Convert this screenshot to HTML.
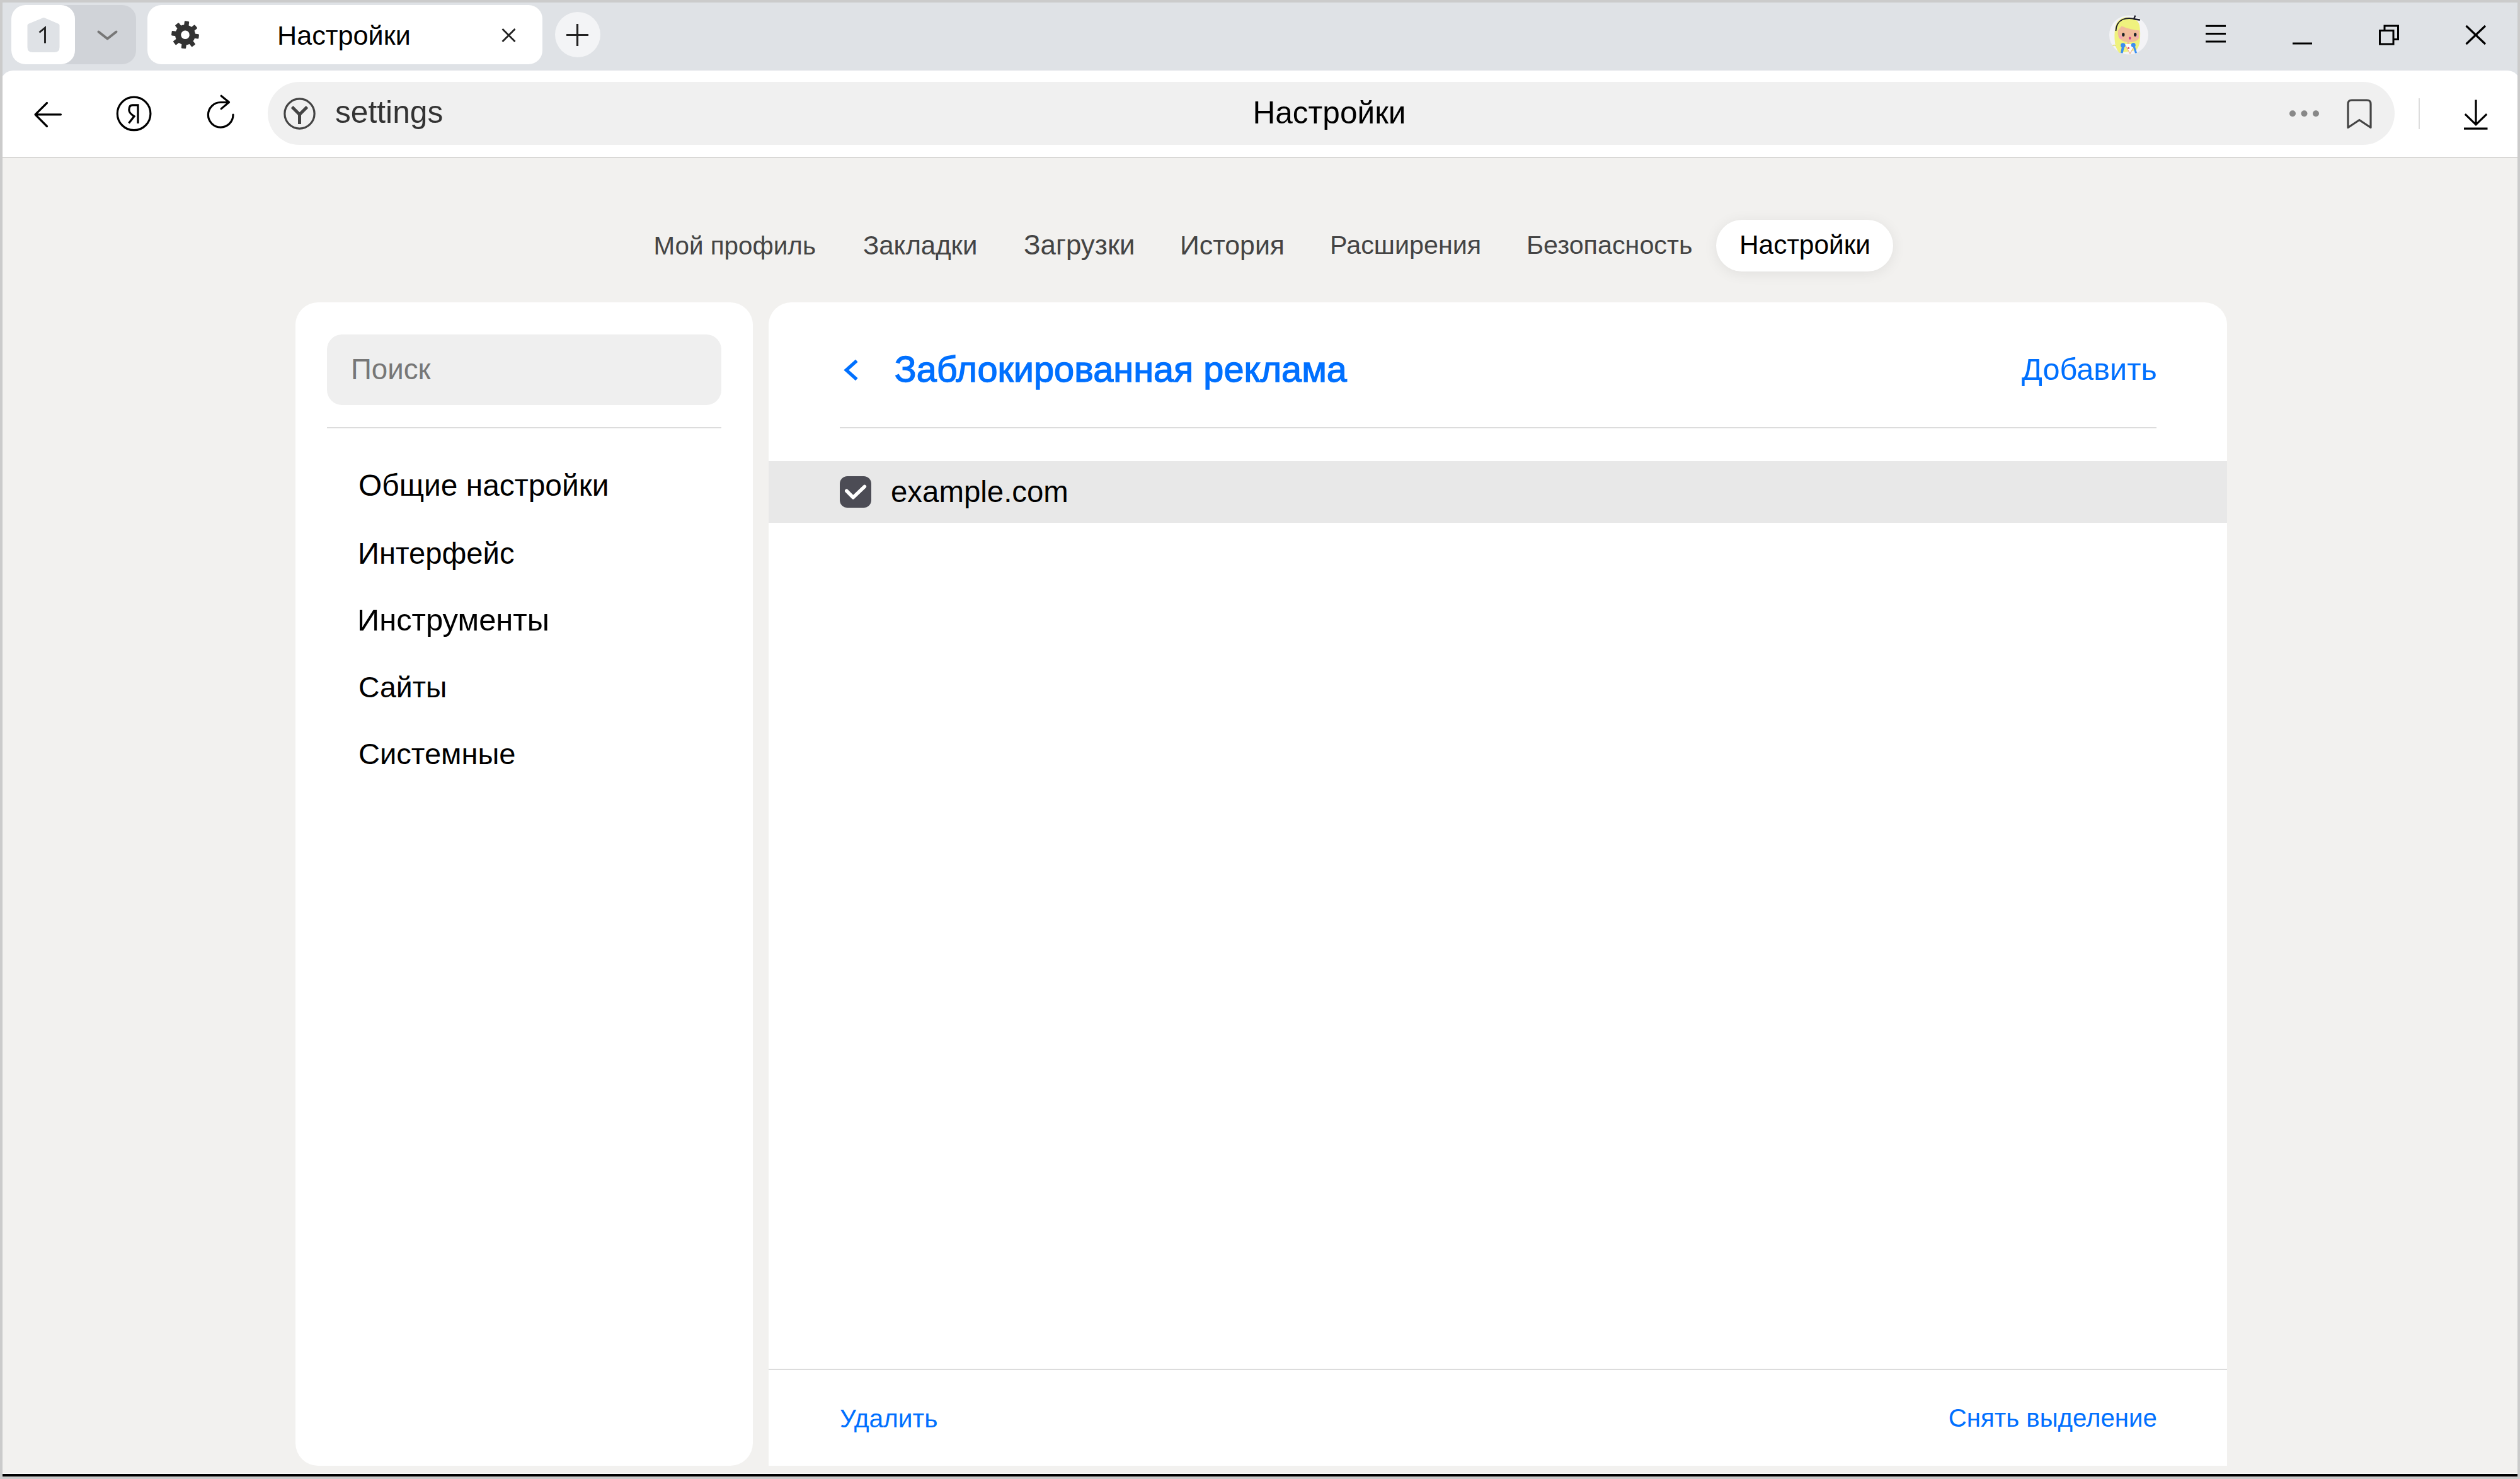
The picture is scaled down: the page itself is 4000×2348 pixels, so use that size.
<!DOCTYPE html>
<html><head><meta charset="utf-8">
<style>
*{box-sizing:border-box;margin:0;padding:0}
html,body{width:4000px;height:2348px;overflow:hidden}
body{position:relative;background:#cbcbcb;font-family:"Liberation Sans",sans-serif}
.a{position:absolute}
.t{position:absolute;white-space:nowrap;line-height:1;z-index:2}
svg{position:absolute;overflow:visible}
</style></head><body>
<!-- tab strip -->
<div class="a" style="left:4px;top:4px;width:3992px;height:120px;background:#dfe2e6"></div>
<!-- tab 1 group -->
<div class="a" style="left:18px;top:8px;width:198px;height:94px;border-radius:22px;background:#d0d3d8"></div>
<div class="a" style="left:18px;top:8px;width:101px;height:94px;border-radius:22px;background:#fff"></div>
<!-- active tab -->
<div class="a" style="left:234px;top:8px;width:627px;height:94px;border-radius:22px;background:#fff"></div>
<!-- new tab button -->
<div class="a" style="left:881px;top:19px;width:72px;height:72px;border-radius:50%;background:#f3f4f6"></div>

<!-- toolbar -->
<div class="a" style="left:1px;top:112px;width:3999px;height:139px;background:#fff;border-radius:20px 20px 0 0;border-bottom:2px solid #d9d8d6"></div>
<!-- address bar -->
<div class="a" style="left:425px;top:130px;width:3376px;height:100px;border-radius:50px;background:#f0f0f0"></div>

<!-- page -->
<div class="a" style="left:4px;top:251px;width:3992px;height:2088px;background:#f2f1ef"></div>
<div class="a" style="left:4px;top:2339px;width:3992px;height:1px;background:#fff"></div>
<div class="a" style="left:4px;top:2340px;width:3992px;height:4px;background:#000"></div>

<!-- nav pill -->
<div class="a" style="left:2724px;top:349px;width:281px;height:82px;border-radius:41px;background:#fff;box-shadow:0 3px 22px rgba(0,0,0,.075)"></div>

<!-- sidebar card -->
<div class="a" style="left:469px;top:480px;width:726px;height:1847px;border-radius:36px;background:#fff"></div>
<div class="a" style="left:519px;top:531px;width:626px;height:112px;border-radius:24px;background:#efefef"></div>
<div class="a" style="left:519px;top:678px;width:626px;height:2px;background:#dcdcdc"></div>

<!-- main card -->
<div class="a" style="left:1220px;top:480px;width:2315px;height:1847px;border-radius:36px 36px 0 0;background:#fff"></div>
<div class="a" style="left:1333px;top:678px;width:2090px;height:2px;background:#dcdcdc"></div>
<div class="a" style="left:1220px;top:732px;width:2315px;height:98px;background:#e8e8e8"></div>
<div class="a" style="left:1220px;top:2173px;width:2315px;height:2px;background:#dcdcdc"></div>
<div class="a" style="left:1333px;top:756px;width:50px;height:50px;border-radius:12px;background:#4c4c55"></div>

<!-- TEXT -->
<div class="t" style="left:440.0px;top:35.2px;font-size:43.2px;color:#000;">Настройки</div>
<div class="t" style="left:1988.4px;top:154.7px;font-size:49.6px;color:#000;">Настройки</div>
<div class="t" style="left:532.0px;top:154.4px;font-size:49.7px;color:#333;">settings</div>
<div class="t" style="left:1037.4px;top:370.0px;font-size:40.4px;color:#444;">Мой профиль</div>
<div class="t" style="left:1370.0px;top:368.7px;font-size:41.9px;color:#444;">Закладки</div>
<div class="t" style="left:1625.0px;top:367.0px;font-size:43.9px;color:#444;">Загрузки</div>
<div class="t" style="left:1873.0px;top:368.0px;font-size:42.8px;color:#444;">История</div>
<div class="t" style="left:2111.0px;top:369.2px;font-size:41.3px;color:#444;">Расширения</div>
<div class="t" style="left:2423.0px;top:369.2px;font-size:41.3px;color:#444;">Безопасность</div>
<div class="t" style="left:2761.0px;top:368.3px;font-size:42.4px;color:#000;">Настройки</div>
<div class="t" style="left:557.0px;top:564.3px;font-size:45.7px;color:#777;">Поиск</div>
<div class="t" style="left:569.0px;top:747.4px;font-size:47.9px;color:#000;">Общие настройки</div>
<div class="t" style="left:568.0px;top:854.5px;font-size:47.2px;color:#000;">Интерфейс</div>
<div class="t" style="left:567.0px;top:960.0px;font-size:48.9px;color:#000;">Инструменты</div>
<div class="t" style="left:569.0px;top:1067.7px;font-size:46.4px;color:#000;">Сайты</div>
<div class="t" style="left:569.0px;top:1172.9px;font-size:47.1px;color:#000;">Системные</div>
<div class="t" style="left:1419.8px;top:558.1px;font-size:57.7px;color:#0070ff;-webkit-text-stroke:1.3px #0070ff;">Заблокированная реклама</div>
<div class="t" style="left:3209.0px;top:561.9px;font-size:48.6px;color:#0070ff;">Добавить</div>
<div class="t" style="left:1414.0px;top:757.3px;font-size:47.4px;color:#000;">example.com</div>
<div class="t" style="left:1333.0px;top:2232.2px;font-size:40.7px;color:#0070ff;">Удалить</div>
<div class="t" style="left:3092.8px;top:2232.0px;font-size:40.2px;color:#0070ff;">Снять выделение</div>

<!-- /TEXT -->
<!-- ICONS -->
<svg width="4000" height="2348" viewBox="0 0 4000 2348" style="left:0;top:0" fill="none">
<!-- tab1 badge -->
<path d="M69.4 31 L91.5 40.5 V75 Q91.5 80 86.5 80 H51.5 Q46.5 80 46.5 75 V40.5 Z" fill="#dfe2e6" stroke="#dfe2e6" stroke-width="6" stroke-linejoin="round"/>
<path d="M62.5 51.5 L71.5 44 V68.5" stroke="#222" stroke-width="2.9" stroke-linejoin="miter"/>
<!-- chevron -->
<polyline points="156.5,50.5 170.5,61.5 184.5,50.5" stroke="#777" stroke-width="4" stroke-linecap="round" stroke-linejoin="round"/>
<!-- gear -->
<g transform="translate(294 55.3) rotate(7)" fill="#333">
 <circle r="16"/>
 <rect x="-3.7" y="-21.8" width="7.4" height="10" rx="1.2"/>
 <rect x="-3.7" y="-21.8" width="7.4" height="10" rx="1.2" transform="rotate(45)"/>
 <rect x="-3.7" y="-21.8" width="7.4" height="10" rx="1.2" transform="rotate(90)"/>
 <rect x="-3.7" y="-21.8" width="7.4" height="10" rx="1.2" transform="rotate(135)"/>
 <rect x="-3.7" y="-21.8" width="7.4" height="10" rx="1.2" transform="rotate(180)"/>
 <rect x="-3.7" y="-21.8" width="7.4" height="10" rx="1.2" transform="rotate(225)"/>
 <rect x="-3.7" y="-21.8" width="7.4" height="10" rx="1.2" transform="rotate(270)"/>
 <rect x="-3.7" y="-21.8" width="7.4" height="10" rx="1.2" transform="rotate(315)"/>
 <circle r="6.8" fill="#fff"/>
</g>
<!-- tab close -->
<path d="M797.5 46 L817.5 66 M817.5 46 L797.5 66" stroke="#222" stroke-width="2.8"/>
<!-- plus -->
<path d="M899 55.5 H934 M916.5 38 V73" stroke="#222" stroke-width="3.2"/>
<!-- avatar -->
<g>
 <circle cx="3379" cy="55.5" r="31" fill="#f3f3f6"/>
 <path d="M3358 42 Q3361 29 3375 27.5 Q3392 27 3396 40 Q3398 52 3396.5 66 Q3395 76 3390 80 L3364 84 Q3357 76 3356.5 62 Q3356 50 3358 42 Z" fill="#eff27e"/>
 <path d="M3367.5 41.5 Q3381 47 3396 48.5 L3395.5 60 Q3393 66.5 3380 67 Q3366 66.5 3362.5 58 Q3361 52 3362 48 Z" fill="#f1bc9b"/>
 <path d="M3358.5 49 Q3359 36 3369 31 Q3380 27 3390 31" stroke="#1d1d2a" stroke-width="1.8"/>
 <path d="M3387 30 L3389 25.5 M3389 30.5 L3396 31.5" stroke="#1d1d2a" stroke-width="2.4" stroke-linecap="round"/>
 <ellipse cx="3370.3" cy="55" rx="2.2" ry="2.9" fill="#1b2226"/>
 <ellipse cx="3389.2" cy="55" rx="2.2" ry="2.9" fill="#1b2226"/>
 <circle cx="3366" cy="58.8" r="2.6" fill="#f3a2bd"/>
 <circle cx="3392.5" cy="58" r="1.8" fill="#f3a2bd"/>
 <ellipse cx="3380.8" cy="60.6" rx="1.7" ry="2.2" fill="#c53a8c"/>
 <rect x="3376.5" y="66" width="3.5" height="5" fill="#f1bc9b"/>
 <path d="M3372 70 H3390 L3381 86 Z" fill="#fbfdff"/>
 <path d="M3373 71 L3381 85 L3389 71" stroke="#f0b08a" stroke-width="1.2"/>
 <circle cx="3369.8" cy="72" r="3.7" fill="#3b8ef0"/>
 <circle cx="3386.3" cy="71.6" r="3.5" fill="#3b8ef0"/>
 <path d="M3368 74 L3366 84 L3369.5 84.5 L3372 75 Z M3389 74 L3392 84 L3389 84.5 L3386 75 Z" fill="#3b8ef0"/>
 <circle cx="3378.6" cy="76.3" r="1.5" fill="#e0405c"/>
 <path d="M3353.5 73 Q3356 70 3358 73" stroke="#dede70" stroke-width="1.6"/>
</g>
<!-- hamburger -->
<path d="M3501 41.2 H3533 M3501 53.6 H3533 M3501 66 H3533" stroke="#000" stroke-width="3"/>
<!-- minimize -->
<path d="M3639 69 H3670" stroke="#000" stroke-width="3"/>
<!-- restore -->
<rect x="3777.5" y="48.5" width="21.5" height="21.5" stroke="#000" stroke-width="3"/>
<path d="M3785 47 V41 H3806.5 V62.5 H3800" stroke="#000" stroke-width="3"/>
<!-- close -->
<path d="M3914.5 41 L3945 70 M3945 41 L3914.5 70" stroke="#000" stroke-width="3.2"/>

<!-- back arrow -->
<path d="M96.5 181.8 H56 M74.5 163.5 L56 181.8 L74.5 200.5" stroke="#000" stroke-width="3.2" stroke-linecap="round" stroke-linejoin="round"/>
<!-- Ya -->
<circle cx="212.6" cy="180.4" r="26.3" stroke="#000" stroke-width="3.2"/>
<path d="M219 196 V166.8 H210.5 C206 166.8 204.8 170.5 204.8 174.5 C204.8 178.5 207 181 213 184.6 L204.5 195.6" stroke="#000" stroke-width="3.2"/>
<!-- reload -->
<path d="M363 162.5 H350.3 A19.8 19.8 0 1 0 370 182" stroke="#000" stroke-width="3.2" stroke-linecap="round"/>
<path d="M351.2 152.3 L363.5 162.2 L351.2 172.6" stroke="#000" stroke-width="3.2" stroke-linecap="round" stroke-linejoin="round"/>
<!-- Y logo -->
<circle cx="475.5" cy="180.5" r="23.6" stroke="#444" stroke-width="3.2"/>
<path d="M463.5 169.8 L475.5 181.8 L487.5 169.8 M475.5 181 V197" stroke="#444" stroke-width="5"/>
<!-- dots -->
<circle cx="3639" cy="180.3" r="5" fill="#888"/>
<circle cx="3657.5" cy="180.3" r="5" fill="#888"/>
<circle cx="3676" cy="180.3" r="5" fill="#888"/>
<!-- bookmark -->
<path d="M3727 202.5 V165 Q3727 159 3733 159 H3757 Q3763 159 3763 165 V202.5 L3745 190.5 Z" stroke="#444" stroke-width="3.2" stroke-linejoin="round"/>
<!-- separator -->
<rect x="3839" y="156" width="2" height="49" fill="#dddddd"/>
<!-- download -->
<path d="M3930 158.5 V197 M3912.8 181.2 L3930 197.8 L3947.2 181.2 M3911 204.2 H3948.5" stroke="#000" stroke-width="3.2" stroke-linejoin="miter"/>
<!-- blue back chevron -->
<polyline points="1359.8,572.8 1343.3,587.4 1359.8,602.2" stroke="#0070ff" stroke-width="5.3" stroke-linejoin="miter"/>
<!-- check -->
<polyline points="1343.8,779.3 1354.2,789.8 1372.3,772.5" stroke="#fff" stroke-width="5.6" stroke-linecap="round" stroke-linejoin="round"/>
</svg>
<!-- /ICONS -->
<!-- window border -->
<div class="a" style="left:0;top:0;width:4000px;height:4px;background:#cbcbcb;z-index:5"></div>
<div class="a" style="left:0;top:0;width:4px;height:2348px;background:#cbcbcb;z-index:5"></div>
<div class="a" style="left:3996px;top:0;width:4px;height:2348px;background:#cbcbcb;z-index:5"></div>
<div class="a" style="left:0;top:2344px;width:4000px;height:4px;background:#cbcbcb;z-index:5"></div>
</body></html>
